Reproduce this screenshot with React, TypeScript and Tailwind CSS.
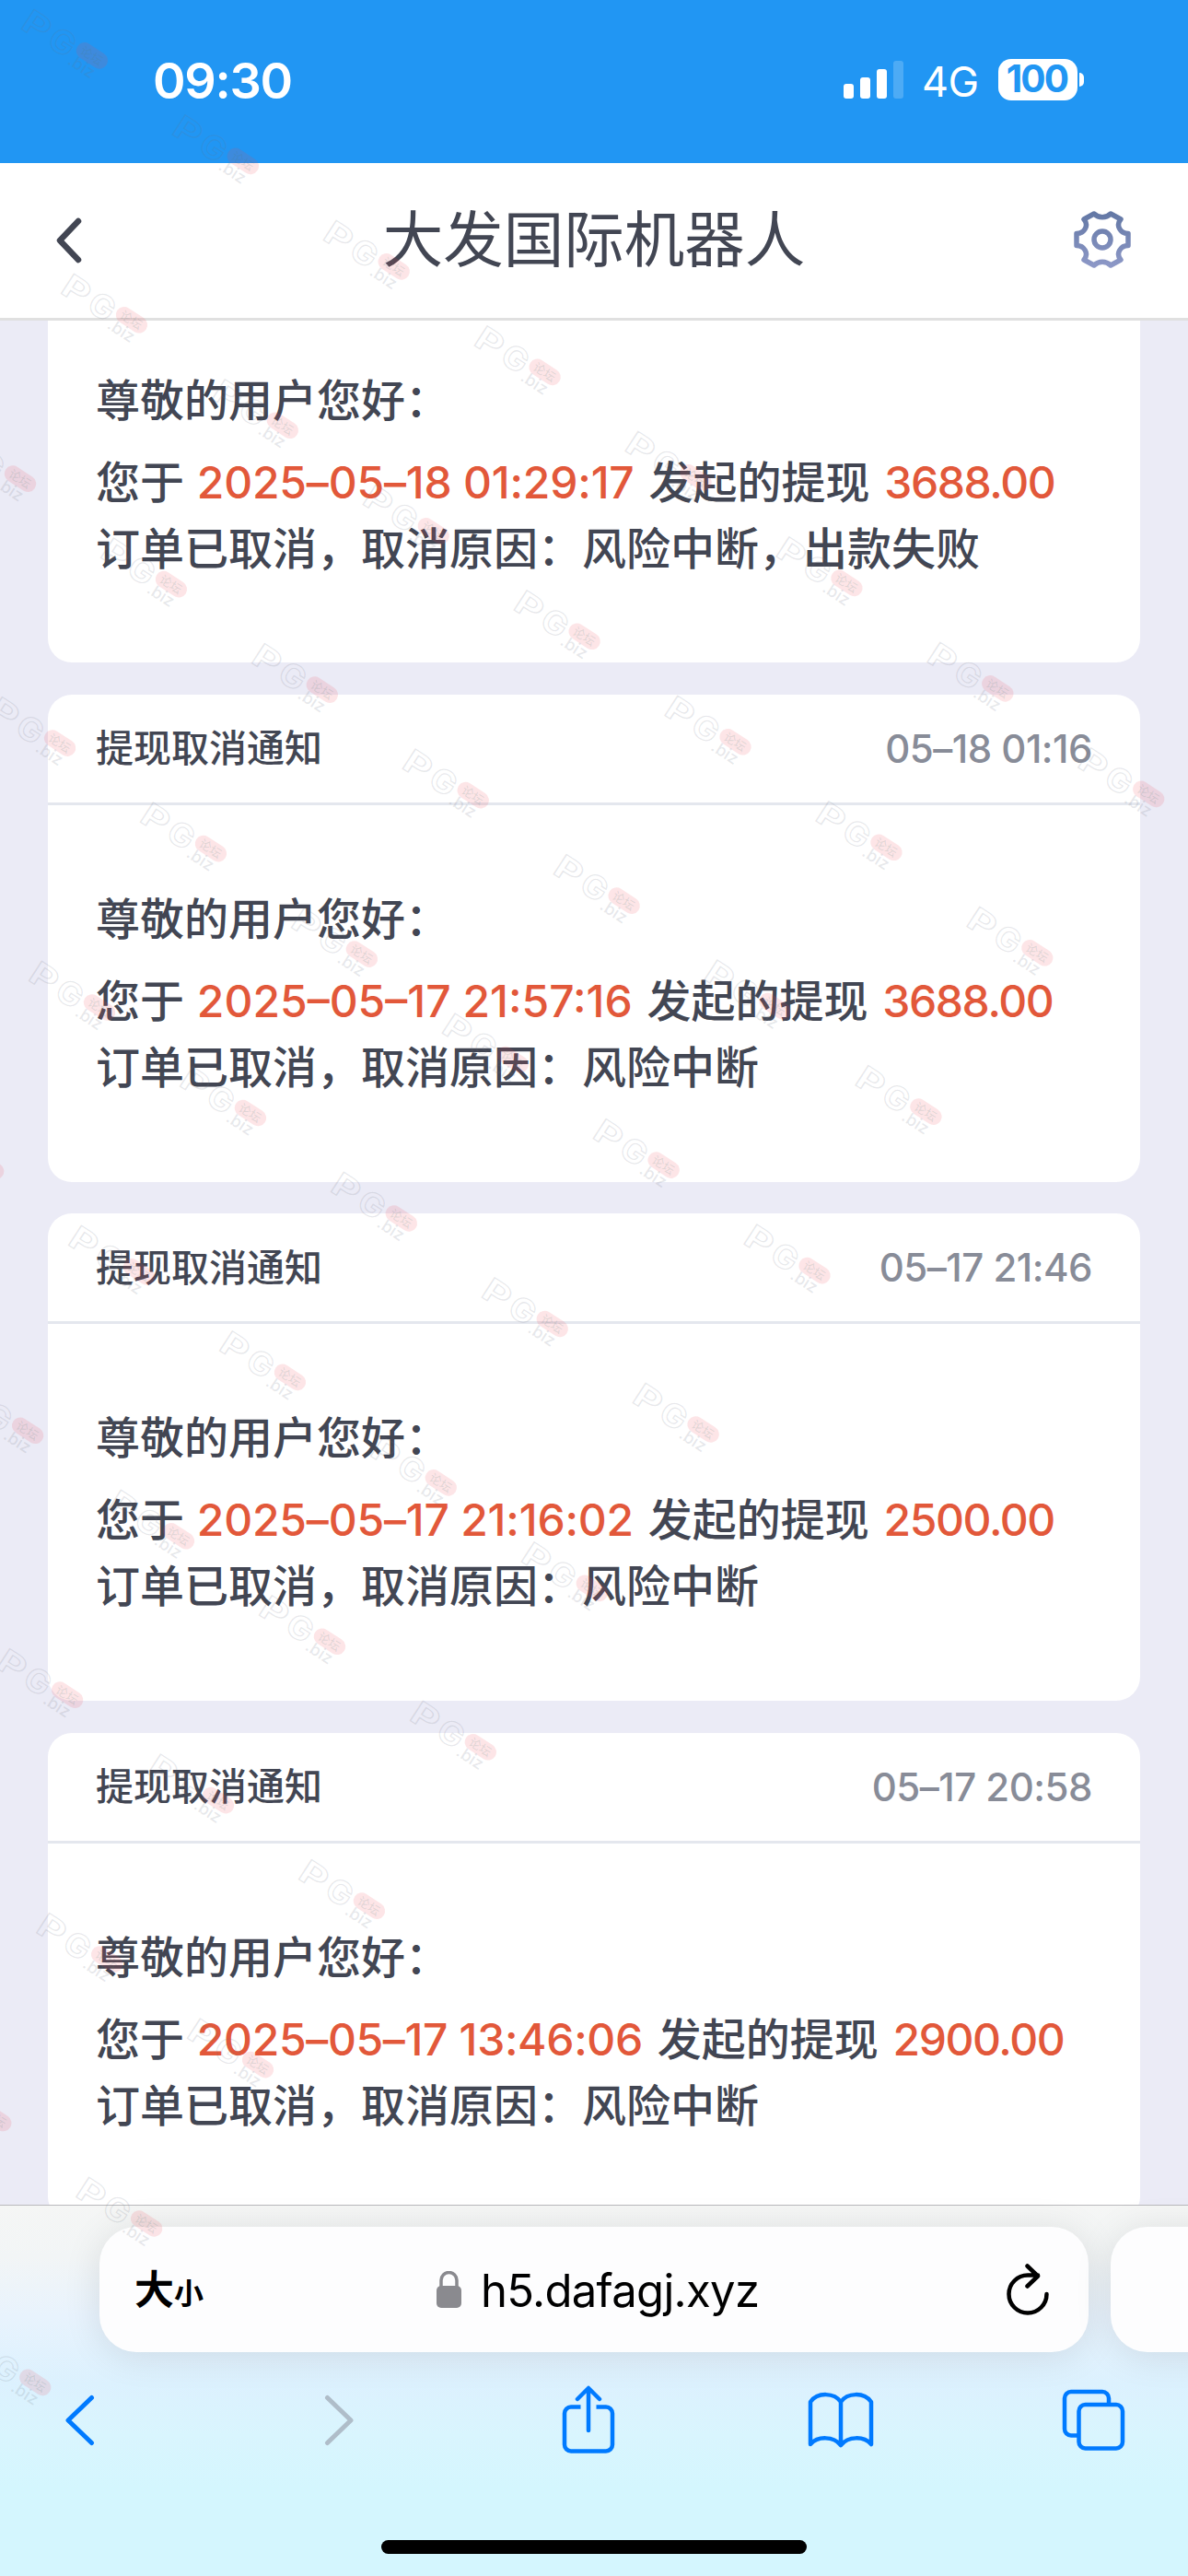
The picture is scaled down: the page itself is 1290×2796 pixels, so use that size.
import { ReactNode } from 'react';

type Notice = {
  time?: string;
  date: string;
  amount: string;
  reason: string;
  tracking: string;
};

const COLON = '\uFF1A';
const COMMA = '\uFF0C';

const notices: Notice[] = [
  // scrolled under the header, only its body is visible
  { date: '2025–05–18 01:29:17', amount: '3688.00', reason: `风险中断${COMMA}出款失败`, tracking: 'tracking-[-0.2px]' },
  { time: '05–18 01:16', date: '2025–05–17 21:57:16', amount: '3688.00', reason: '风险中断', tracking: 'tracking-[0px]' },
  { time: '05–17 21:46', date: '2025–05–17 21:16:02', amount: '2500.00', reason: '风险中断', tracking: 'tracking-[-0.2px]' },
  { time: '05–17 20:58', date: '2025–05–17 13:46:06', amount: '2900.00', reason: '风险中断', tracking: 'tracking-[-0.35px]' },
];

const App = () => {
  return (
    <main className="relative flex h-[2796px] w-[1290px] flex-col overflow-hidden bg-[#ebebf6] font-['Inter','Noto_Sans_CJK_SC',sans-serif] text-[#424653]">
      <StatusBar />
      <Header />

      <section className="flex min-h-0 flex-1 flex-col gap-[34.5px] overflow-hidden px-[52px]">
        {notices.map(n => (
          <NoticeCard key={n.date} notice={n} />
        ))}
      </section>

      <BrowserBar />
      <Watermarks />
    </main>
  );
};

export default App;

const StatusBar = () => (
  <div className="flex h-[177px] shrink-0 items-start justify-between bg-[#2196f3] pr-[113px] pl-[166px] text-white">
    <span className="mt-[56px] text-[54px] leading-[64px] font-semibold tracking-[-1.3px]">09:30</span>
    <div className="mt-[64px] flex h-[45px] items-center">
      <svg width="65" height="45" viewBox="0 0 65 45" fill="currentColor">
        <rect x="0" y="27" width="11" height="16" rx="3" />
        <rect x="18" y="20" width="11" height="23" rx="3" />
        <rect x="36" y="11" width="11" height="32" rx="3" />
        <rect x="54" y="2" width="11" height="41" rx="3" opacity="0.2" />
      </svg>
      <span className="mt-[3px] ml-[20px] w-[61px] text-[45px] leading-[45px] tracking-[-0.5px] whitespace-nowrap">4G</span>
      <span className="ml-[22px] flex h-[45px] w-[86px] items-center justify-center rounded-[14px] bg-white pr-[2px] text-[40.5px] leading-none font-bold tracking-[-1.8px] text-[#2196f3]">
        100
      </span>
      <span className="ml-[2px] h-[15px] w-[5px] rounded-r-full bg-white" />
    </div>
  </div>
);

const Header = () => (
  <header className="flex h-[171px] shrink-0 items-center justify-between border-b-[3px] border-[#e0e0e0] bg-white pr-[62px] pl-[60px]">
    <svg width="64" height="50" viewBox="0 0 64 50" fill="none" stroke="currentColor" strokeWidth="6.5" strokeLinecap="round" strokeLinejoin="round">
      <path d="M25 4 5 25l20 21" />
    </svg>
    <h1 className="text-[65.5px] leading-none">大发国际机器人</h1>
    <svg className="mt-[-2px]" width="62" height="62" viewBox="0 0 62 62" fill="none" stroke="url(#gear)" strokeWidth="5.500" strokeLinejoin="round">
      <defs>
        <linearGradient id="gear" x1="0" y1="0" x2="0" y2="62" gradientUnits="userSpaceOnUse">
          <stop stopColor="#6277a4" />
          <stop offset="1" stopColor="#8e99c8" />
        </linearGradient>
      </defs>
      <path d="M22 3C27 8 35 8 40 3L51 9C45 16 51 24.500 59 24.500V37.500C51 37.500 45 46 51 53L40 59C35 54 27 54 22 59L11 53C17 46 11 37.500 3 37.500V24.500C11 24.500 17 16 11 9Z" />
      <circle cx="31" cy="31" r="9" />
    </svg>
  </header>
);

const NoticeCard = ({ notice }: { notice: Notice }) => (
  <article className={notice.time ? 'h-[529px] shrink-0 rounded-[26px] bg-white' : 'h-[371px] shrink-0 rounded-b-[26px] bg-white'}>
    {notice.time && (
      <div className="flex h-[120px] items-center justify-between border-b-[3px] border-[#e4e7ee] px-[52px]">
        <h2 className="mt-px text-[41px] leading-none font-medium">提现取消通知</h2>
        <time className="mt-px text-[42px] leading-none font-medium tracking-[-0.5px] text-[#888c98]">{notice.time}</time>
      </div>
    )}
    <div
      className={`px-[52px] text-[48px] leading-[72px] font-medium whitespace-nowrap ${notice.time ? 'pt-[88px]' : 'pt-[51px]'}`}
    >
      <p>尊敬的用户您好{COLON}</p>
      <p className="mt-[17px]">
        您于 <Red className={`mr-[3px] ml-px ${notice.tracking}`}>{notice.date}</Red> 发起的提现{' '}
        <Red className="ml-[3px] tracking-[-1.4px]">{notice.amount}</Red>
      </p>
      <p>
        订单已取消{COMMA}取消原因{COLON}
        {notice.reason}
      </p>
    </div>
  </article>
);

const Red = ({ className, children }: { className: string; children: ReactNode }) => (
  <span className={`text-[#e2583a] ${className}`}>{children}</span>
);

const BrowserBar = () => (
  <footer className="flex h-[403px] shrink-0 flex-col border-t border-[#b9b9bc] bg-[linear-gradient(#f5f6f5,#f2f5f6_14%,#e8f3fd_30%,#dcf1fe_48%,#d9f5fe_62%,#d4f6fe_76%)]">
    <div className="mt-[23px] ml-[108px] flex gap-[24px]">
      <div className="flex h-[136px] w-[1074px] shrink-0 items-center rounded-[40px] bg-[#fdfdfe] pr-[43px] pl-[38px] text-black shadow-[0_4px_40px_rgba(0,0,0,0.1)]">
        <span className="mt-px w-[328px] text-[43px] font-bold">
          大<span className="text-[32px]">小</span>
        </span>
        <svg width="27" height="40" viewBox="0 0 27 40" fill="none">
          <path d="M5 18V10a8.500 8.500 0 0 1 17 0v8" stroke="#8a8a8f" strokeWidth="3.500" />
          <rect y="16" width="27" height="24" rx="5" fill="#8a8a8f" />
        </svg>
        <span className="mt-[2px] ml-[21px] flex-1 text-[49px] leading-none tracking-[-0.7px]">h5.dafagj.xyz</span>
        <svg width="46" height="56" viewBox="0 0 46 56" fill="none" stroke="currentColor" strokeWidth="4.500" strokeLinecap="round" strokeLinejoin="round">
          <path d="M43.500 33A20.500 20.500 0 1 1 23 12.500H34M22.500 2.500 34 13.500 22.500 24.500" />
        </svg>
      </div>
      <div className="h-[136px] w-[200px] shrink-0 rounded-[40px] bg-[#fdfdfe] shadow-[0_4px_40px_rgba(0,0,0,0.1)]" />
    </div>

    <nav className="mt-[36px] flex h-[76px] items-center justify-between pr-[67px] pl-[55px] text-[#007aff] *:flex *:w-[72px] *:justify-center">
      <div className="pr-[9px]">
        <svg width="34" height="56" viewBox="0 0 34 56" fill="none" stroke="currentColor" strokeWidth="5" strokeLinecap="round" strokeLinejoin="round">
          <path d="M29.500 3.500 4 28l25.500 24.500" />
        </svg>
      </div>
      <div className="pl-[6px]">
        <svg width="34" height="56" viewBox="0 0 34 56" fill="none" stroke="#afbdc9" strokeWidth="5" strokeLinecap="round" strokeLinejoin="round">
          <path d="M4.500 3.500 30 28 4.500 52.500" />
        </svg>
      </div>
      <div>
        <svg width="58" height="76" viewBox="0 0 58 76" fill="none" stroke="currentColor" strokeWidth="4.500" strokeLinecap="round" strokeLinejoin="round">
          <path d="M29 49V4M17 15 29 3l12 12" />
          <path d="M20.500 23.500H10a7 7 0 0 0-7 7v34a7 7 0 0 0 7 7h38a7 7 0 0 0 7-7v-34a7 7 0 0 0-7-7H37.500" strokeLinecap="butt" />
        </svg>
      </div>
      <div>
        <svg width="72" height="62" viewBox="0 0 72 62" fill="none" stroke="currentColor" strokeWidth="4.500" strokeLinecap="round" strokeLinejoin="round">
          <path d="M36 11C29 1 11 0 3 11V57C11 48 28 48 36 58C44 48 61 48 69 57V11C61 0 43 1 36 11ZV58" />
        </svg>
      </div>
      <div>
        <svg width="69" height="68" viewBox="0 0 69 68" fill="none" stroke="currentColor" strokeWidth="4.500">
          <rect x="18.500" y="17" width="47.500" height="47.500" rx="7" />
          <path d="M18.500 50.500H10a7 7 0 0 1-7-7V10a7 7 0 0 1 7-7h34a7 7 0 0 1 7 7v7" />
        </svg>
      </div>
    </nav>
    <div className="mx-auto mt-[92px] h-[15px] w-[462px] rounded-full bg-black" />
  </footer>
);

// Forum logo repeated on a skewed grid, laid over the whole screen
const Watermarks = () => {
  const marks: { x: number; y: number }[] = [];
  for (let i = 0; i <= 10; i++) {
    for (let j = -3; i + j <= 7; j++) {
      const x = 21 + i * 43 + j * 163.9;
      if (x > -95) marks.push({ x, y: 30 + i * 286.9 + j * 114.5 });
    }
  }

  return (
    <svg className="pointer-events-none absolute inset-0" width="1290" height="2796" aria-hidden="true">
      {marks.map(m => (
        <g key={`${m.x}-${m.y}`} transform={`translate(${m.x} ${m.y}) rotate(33)`} fontFamily="Inter">
          <g fill="none" stroke="#6b7280" strokeOpacity="0.16" strokeWidth="1.3" fontWeight="700" fontSize="35">
            <text transform="scale(1.3 1)">P</text>
            <text transform="translate(34 0) scale(1.05 1)">G</text>
          </g>
          <rect x="64" y="-26.500" width="37.500" height="18" rx="9" fill="#f04452" fillOpacity="0.14" />
          <text x="69.500" y="-12.500" fontSize="13" fill="#4b8078" fillOpacity="0.18" fontFamily="Noto Sans CJK SC">论坛</text>
          <text x="64" y="4.500" fontSize="18" fontWeight="500" fill="#6b7280" fillOpacity="0.17">.biz</text>
        </g>
      ))}
    </svg>
  );
};
